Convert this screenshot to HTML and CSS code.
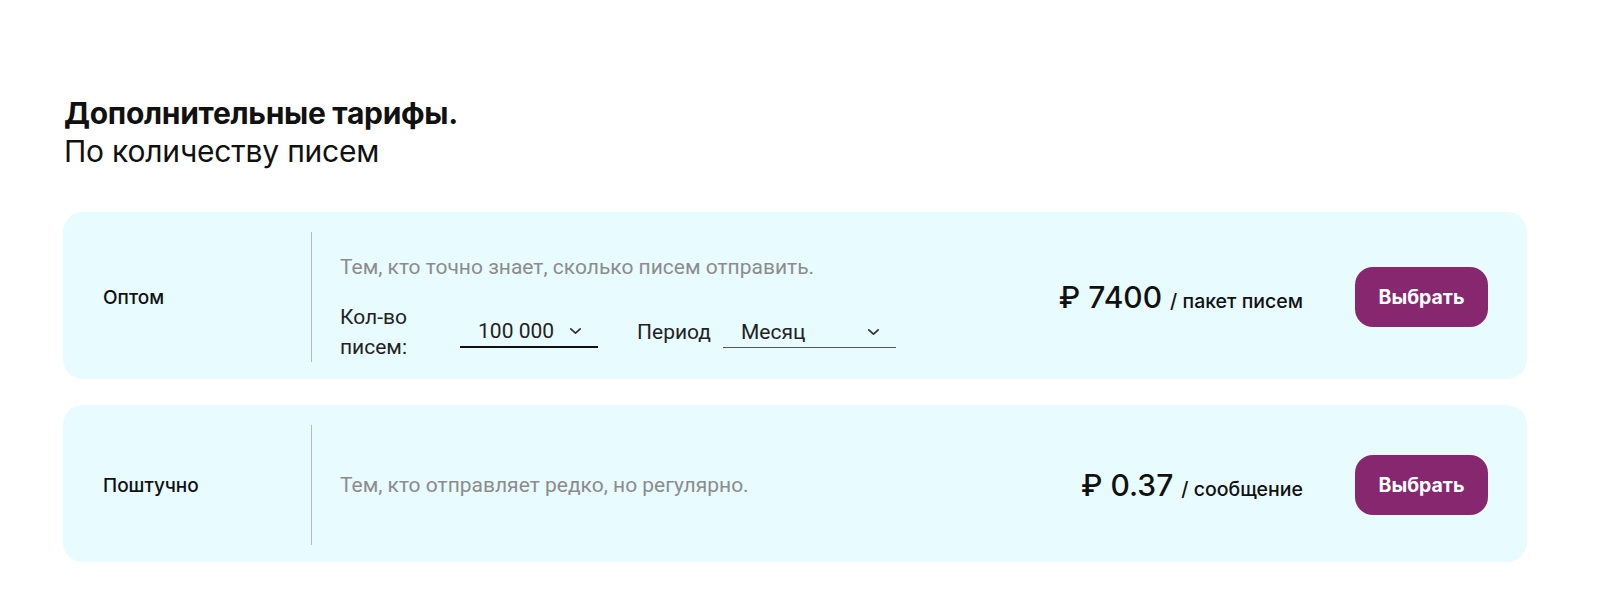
FILE: index.html
```html
<!DOCTYPE html>
<html lang="ru">
<head>
    <meta charset="UTF-8">
    <meta name="viewport" content="width=device-width, initial-scale=1.0">
    <title>Дополнительные тарифы</title>
    <link rel="stylesheet" href="styles.css">
</head>
<body>

    <section class="tariffs">
        <h2 class="tariffs-title">Дополнительные тарифы.<br><span>По количеству писем</span></h2>

        <div class="tariff">
            <div class="tariff-name">Оптом</div>
            <div class="tariff-body">
                <p class="tariff-desc">Тем, кто точно знает, сколько писем отправить.</p>
                <div class="tariff-options">
                    <span class="option-label">Кол-во<br>писем:</span>
                    <div class="select select-count">
                        <span>100 000</span>
                        <svg width="13" height="8" viewBox="0 0 13 8"><path d="M1.8 1.8 6.5 6.2 11.2 1.8" fill="none" stroke="#333" stroke-width="1.7" stroke-linecap="round" stroke-linejoin="round"/></svg>
                    </div>
                    <span class="option-label">Период</span>
                    <div class="select select-period">
                        <span>Месяц</span>
                        <svg width="13" height="8" viewBox="0 0 13 8"><path d="M1.8 1.8 6.5 6.2 11.2 1.8" fill="none" stroke="#333" stroke-width="1.7" stroke-linecap="round" stroke-linejoin="round"/></svg>
                    </div>
                </div>
            </div>
            <div class="tariff-price">₽ 7400 <small>/ пакет писем</small></div>
            <button class="tariff-btn">Выбрать</button>
        </div>

        <div class="tariff">
            <div class="tariff-name">Поштучно</div>
            <div class="tariff-body tariff-body-single">
                <p class="tariff-desc">Тем, кто отправляет редко, но регулярно.</p>
            </div>
            <div class="tariff-price">₽ 0.37 <small>/ сообщение</small></div>
            <button class="tariff-btn">Выбрать</button>
        </div>
    </section>

</body>
</html>
```

FILE: styles.css
```css
body {
    margin: 0;
    padding: 0;
    background-color: #ffffff;
    color: #111111;
    font-family: Inter, "Noto Sans", sans-serif;
}

.tariffs {
    width: 1464px;
    padding: 94px 0 0 63px;
}

.tariffs-title {
    margin: 0 0 42px 1px;
    font-size: 30px;
    line-height: 38px;
    font-weight: 700;
    letter-spacing: -0.3px;
}

.tariffs-title span {
    font-weight: 400;
    letter-spacing: -0.2px;
}

/* карточка тарифа */
.tariff {
    display: flex;
    align-items: center;
    background-color: #e8fbff;
    border-radius: 20px;
    padding: 20px 39px 17px 40px;
    margin-bottom: 26px;
}

.tariff-name {
    width: 208px;
    font-size: 19px;
    font-weight: 500;
    align-self: center;
}

.tariff-body {
    align-self: stretch;
    border-left: 1px solid #b9b9b9;
    padding: 22px 0 0 28px;
    min-height: 120px;
    box-sizing: border-box;
}

.tariff-body-single {
    display: flex;
    align-items: center;
    padding-top: 0;
}

.tariff-desc {
    margin: 0;
    font-family: Roboto, sans-serif;
    font-size: 21px;
    line-height: 26px;
    color: #8c8c8c;
}

.tariff-options {
    display: flex;
    align-items: center;
    margin-top: 22px;
    font-family: Roboto, sans-serif;
    font-size: 21px;
    color: #222222;
}

.option-label {
    line-height: 30px;
}

.select {
    display: flex;
    align-items: center;
    justify-content: space-between;
    box-sizing: border-box;
    height: 31px;
    padding: 0 16px 0 18px;
    border-bottom: 2px solid #111111;
}

.select-count {
    width: 138px;
    margin: 0 39px 0 53px;
}

.select-period {
    width: 173px;
    margin-left: 12px;
    border-bottom: 1.5px solid #555555;
}

.tariff-price {
    margin-left: auto;
    font-size: 30px;
    font-weight: 500;
    white-space: nowrap;
}

.tariff-price small {
    font-size: 19.5px;
}

.tariff-btn {
    margin-left: 52px;
    width: 133px;
    height: 60px;
    border: none;
    border-radius: 18px;
    background-color: #86276f;
    color: #ffffff;
    font-family: Inter, sans-serif;
    font-size: 19.5px;
    font-weight: 700;
    cursor: pointer;
}
```
